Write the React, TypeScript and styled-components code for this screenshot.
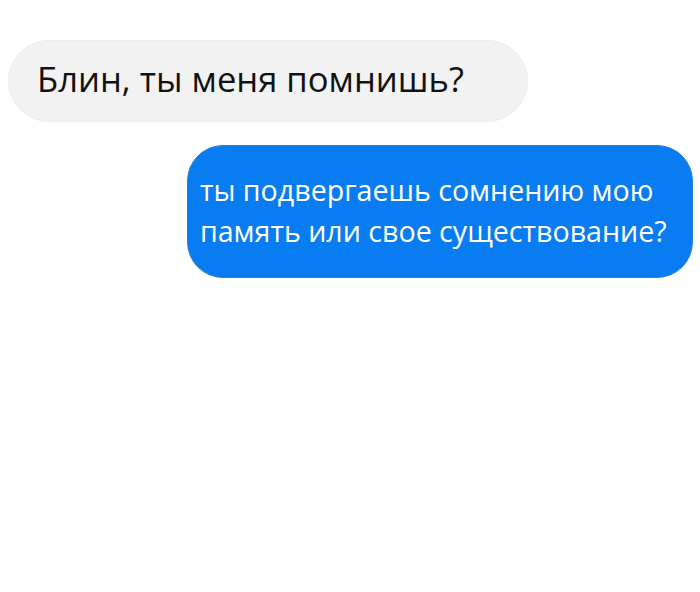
import React from 'react';
import styled, { createGlobalStyle } from 'styled-components';

const GlobalStyle = createGlobalStyle`
  html, body {
    margin: 0;
    padding: 0;
    background: #ffffff;
  }
  body {
    font-family: "Open Sans", "Liberation Sans", sans-serif;
  }
`;

const Thread = styled.div`
  width: 700px;
  height: 592px;
  display: flex;
  flex-direction: column;
  padding: 40px 7px 0 8px;
  box-sizing: border-box;
  gap: 23px;
`;

const Bubble = styled.div<{ $mine?: boolean }>`
  align-self: ${(p) => (p.$mine ? 'flex-end' : 'flex-start')};
  box-sizing: border-box;
  width: ${(p) => (p.$mine ? '506px' : '520px')};
  height: ${(p) => (p.$mine ? '133px' : '82px')};
  display: flex;
  align-items: center;
  padding: ${(p) => (p.$mine ? '0 0 3px 12px' : '0 0 5px 28px')};
  border-radius: ${(p) => (p.$mine ? '36px' : '41px')};
  background: ${(p) => (p.$mine ? '#0a7cf1' : '#f2f2f2')};
  border: 1px solid ${(p) => (p.$mine ? '#2b7fd8' : '#ededed')};
  color: ${(p) => (p.$mine ? '#ffffff' : '#111111')};
  font-size: ${(p) => (p.$mine ? '28.6px' : '34.6px')};
  line-height: ${(p) => (p.$mine ? '41px' : '40px')};
`;

function App() {
  return (
    <>
      <GlobalStyle />
      <Thread>
        <Bubble>Блин, ты меня помнишь?</Bubble>
        <Bubble $mine>
          ты подвергаешь сомнению мою<br />
          память или свое существование?
        </Bubble>
      </Thread>
    </>
  );
}

export default App;
